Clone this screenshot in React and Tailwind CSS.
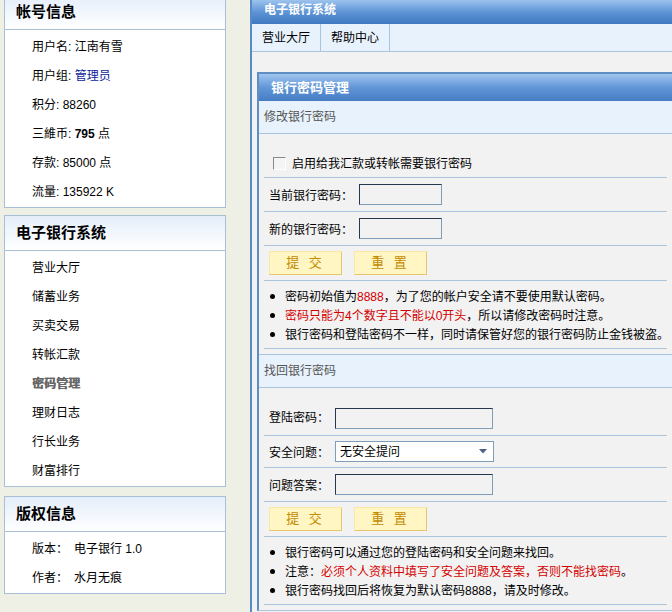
import React from "react";

const font = "font-[Liberation_Sans,Noto_Sans_CJK_SC,sans-serif]";

const SideBox = ({ title, className = "", children }) => (
  <div className={`border border-[#a8bfd5] bg-white ${className}`}>
    <div className="h-[35px] pl-[11px] flex items-center border-b border-[#a8bfd5] bg-linear-to-b from-[#e4eefa] to-white text-[15px] font-bold text-black">
      {title}
    </div>
    <ul className="pt-[3px]">{children}</ul>
  </div>
);

const Item = ({ children, className = "text-black" }) => (
  <li className={`h-[29px] leading-[29px] pl-[27px] text-[12px] whitespace-nowrap ${className}`}>{children}</li>
);

const Dot = () => <span className="w-[5px] h-[5px] rounded-full bg-black shrink-0 ml-[6px] mr-[10px]" />;

const Bullet = ({ children }) => (
  <li className="flex items-center h-[19px] text-[12px] text-black whitespace-nowrap">
    <Dot />
    <span>{children}</span>
  </li>
);

// h is passed whole so only one height class ends up on the row
const Row = ({ children, h = "h-[34px] items-center", className = "pl-[5px]" }) => (
  <div className={`${h} flex border-b border-[#a9c4dc] ${className}`}>{children}</div>
);

const Input = ({ w }) => (
  <span
    className={`${w} h-[21px] border border-t-[#26384b] border-l-[#26384b] border-r-[#7f9db9] border-b-[#7f9db9] bg-[#f2f2f2]`}
  />
);

const Label = ({ children }) => <span className="text-[12px] text-black whitespace-nowrap">{children}</span>;

const Buttons = () => (
  <div className="h-[35px] flex items-start pt-[5px] border-b border-[#a9c4dc] pl-[5px] gap-[12px]">
    {["提 交", "重 置"].map((t) => (
      <button
        key={t}
        className="w-[73px] h-[24px] bg-[#fff6c4] border border-t-[#fbe8a6] border-l-[#fbe8a6] border-r-[#e9c66e] border-b-[#e9c66e] text-[13px] text-[#c38a00] tracking-[3px] whitespace-pre"
      >
        {t}
      </button>
    ))}
  </div>
);

export default function App() {
  return (
    <div className={`w-[672px] h-[612px] overflow-hidden bg-[#eef0e6] flex ${font}`}>
      {/* left column */}
      <div className="w-[250px] shrink-0 pl-[4px] pr-[24px]">
        <SideBox title="帐号信息" className="-mt-[6px]">
          <Item>用户名: 江南有雪</Item>
          <Item>
            用户组: <span className="text-[#0a1c9c]">管理员</span>
          </Item>
          <Item>积分: 88260</Item>
          <Item>
            三維币: <b>795</b> 点
          </Item>
          <Item>存款: 85000 点</Item>
          <Item>流量: 135922 K</Item>
        </SideBox>
        <SideBox title="电子银行系统" className="mt-[7px]">
          {["营业大厅", "储蓄业务", "买卖交易", "转帐汇款"].map((t) => (
            <Item key={t}>{t}</Item>
          ))}
          {/* current page: bold grey */}
          <Item className="font-bold text-[#666] [text-shadow:0.6px_0_0_#666]">密码管理</Item>
          {["理财日志", "行长业务", "财富排行"].map((t) => (
            <Item key={t}>{t}</Item>
          ))}
        </SideBox>
        <SideBox title="版权信息" className="mt-[9px]">
          <Item>
            版本：<span className="ml-[6px]">电子银行 1.0</span>
          </Item>
          <Item>
            作者：<span className="ml-[6px]">水月无痕</span>
          </Item>
        </SideBox>
      </div>

      {/* main */}
      <div className="flex-1 min-w-0 border-l-2 border-[#5a8bc4] bg-[#f2f2f2]">
        <div className="h-[24px] pl-[12px] pt-[2px] leading-[16px] bg-linear-to-b from-[#9dc3ee] via-[#5e94d6] to-[#4079c1] text-white font-bold text-[12px]">
          电子银行系统
        </div>
        <div className="h-[28px] flex bg-[#e8f2fc] border-b border-[#a9c4dc] text-[12px] text-black">
          <div className="px-[10px] flex items-center border-r border-[#a9c4dc]">营业大厅</div>
          <div className="px-[10px] flex items-center border-r border-[#a9c4dc]">帮助中心</div>
        </div>

        <div className="mt-[20px] ml-[5px] border-l-2 border-t-2 border-[#5e8ec4] pb-[5px] border-b border-b-[#a9c4dc]">
          <div className="h-[27px] pl-[12px] flex items-center bg-linear-to-b from-[#a0c5ee] via-[#6196d7] to-[#457dc4] text-white font-bold text-[13px]">
            银行密码管理
          </div>

          <div className="h-[33px] pl-[5px] flex items-center bg-[#e8f2fc] border-b border-[#a9c4dc] text-[12px] text-[#555]">
            修改银行密码
          </div>
          <div className="px-[5px] pt-[12px]">
            <Row h="h-[32px] items-center pt-[4px]" className="pl-[9px]">
              <span className="w-[13px] h-[13px] border border-t-[#8a8a8a] border-l-[#8a8a8a] border-r-white border-b-white bg-[#f4f4f4] mr-[6px]" />
              <Label>启用给我汇款或转帐需要银行密码</Label>
            </Row>
            <Row>
              <span className="w-[90px]">
                <Label>当前银行密码：</Label>
              </span>
              <Input w="w-[83px]" />
            </Row>
            <Row>
              <span className="w-[90px]">
                <Label>新的银行密码：</Label>
              </span>
              <Input w="w-[83px]" />
            </Row>
            <Buttons />
            <ul className="pt-[6px] pb-[4px] border-b border-[#a9c4dc]">
              <Bullet>
                密码初始值为<span className="text-[#d40000]">8888</span>，为了您的帐户安全请不要使用默认密码。
              </Bullet>
              <Bullet>
                <span className="text-[#d40000]">密码只能为4个数字且不能以0开头</span>，所以请修改密码时注意。
              </Bullet>
              <Bullet>银行密码和登陆密码不一样，同时请保管好您的银行密码防止金钱被盗。</Bullet>
            </ul>
          </div>

          <div className="mt-[5px] h-[34px] pl-[5px] flex items-center bg-[#e8f2fc] border-t border-b border-[#a9c4dc] text-[12px] text-[#555]">
            找回银行密码
          </div>
          <div className="px-[5px] pt-[12px]">
            <Row h="h-[36px] items-end pb-[6px]">
              <span className="w-[66px] self-center mt-[4px]">
                <Label>登陆密码：</Label>
              </span>
              <Input w="w-[158px]" />
            </Row>
            <Row h="h-[32px] items-center">
              <span className="w-[66px]">
                <Label>安全问题：</Label>
              </span>
              <span className="w-[159px] h-[21px] bg-white border border-[#7f9db9] flex items-center justify-between pl-[4px] pr-[6px] text-[12px] text-black">
                无安全提问
                <svg width="8" height="5" viewBox="0 0 8 5">
                  <path d="M0 0H8L4 4.5Z" fill="#4d6185" />
                </svg>
              </span>
            </Row>
            <Row>
              <span className="w-[66px]">
                <Label>问题答案：</Label>
              </span>
              <Input w="w-[158px]" />
            </Row>
            <Buttons />
            <ul className="pt-[6px] pb-[4px] border-b border-[#a9c4dc]">
              <Bullet>银行密码可以通过您的登陆密码和安全问题来找回。</Bullet>
              <Bullet>
                注意：<span className="text-[#d40000]">必须个人资料中填写了安全问题及答案，否则不能找密码</span>。
              </Bullet>
              <Bullet>银行密码找回后将恢复为默认密码8888，请及时修改。</Bullet>
            </ul>
          </div>
        </div>
      </div>
    </div>
  );
}
